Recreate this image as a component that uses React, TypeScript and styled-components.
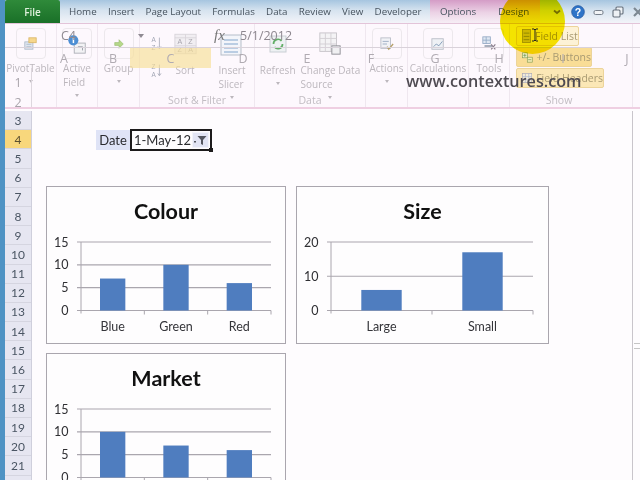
import React from "react";
import styled, { createGlobalStyle } from "styled-components";

const Global = createGlobalStyle`
  html, body { margin: 0; padding: 0; background: #fff; }
  * { box-sizing: border-box; }
`;

const Frame = styled.div`
  position: relative;
  width: 640px;
  height: 480px;
  overflow: hidden;
  display: flex;
  flex-direction: column;
  background: #fefcfe;
  border-left: 5px solid #4f93c4;
  font-family: "Open Sans", "Liberation Sans", sans-serif;
`;

const TitleBar = styled.div`
  height: 24px;
  margin-left: -5px;
  flex: none;
  display: flex;
  align-items: center;
  background: linear-gradient(#a6c5e0, #d6e3ef 45%, #f3f4f9);
  border-bottom: 1px solid #e3c4d9;
`;

const FileTab = styled.div`
  width: 55px;
  height: 23px;
  margin-left: 5px;
  display: flex;
  align-items: center;
  justify-content: center;
  background: linear-gradient(#2f8a3a, #1a7028);
  border-radius: 2px 2px 0 0;
  color: #dff0dc;
  font-size: 10px;
  font-weight: 600;
`;

const Tabs = styled.div`
  display: flex;
  align-items: center;
  gap: 11.2px;
  margin-left: 9px;
`;

const Tab = styled.span`
  color: #47535f;
  font-size: 9.8px;
  white-space: nowrap;
`;

const ContextTabs = styled.div`
  position: absolute;
  left: 425px;
  top: 0;
  width: 110px;
  height: 23px;
  display: flex;
  align-items: center;
  gap: 22px;
  padding-left: 10px;
  background: linear-gradient(#d49cc6, #ecd3e6 55%, #f6eef5);
`;

const WindowControls = styled.div`
  position: absolute;
  left: 546px;
  top: 0;
  height: 24px;
  width: 100px;
  display: flex;
  align-items: center;
  gap: 8px;
`;

const Ribbon = styled.div`
  position: relative;
  height: 85px;
  margin-bottom: 2px;
  flex: none;
  display: flex;
  background: #fdf8fd;
  border-bottom: 2px solid #efcfe2;
`;

const Group = styled.div<{ $w: number; $captionShift?: number }>`
  width: ${(p) => p.$w}px;
  flex: none;
  display: flex;
  flex-direction: column;
  align-items: center;
  padding: 4px ${(p) => p.$captionShift ?? 0}px 0 0;
  border-right: 1px solid #efe7ef;
`;

const GroupBody = styled.div`
  flex: 1 1 0;
  min-height: 0;
  display: flex;
  justify-content: center;
  gap: 5px;
  width: 100%;
`;

const SortBody = styled(GroupBody)`
  justify-content: flex-start;
  gap: 0;
  padding-left: 10px;
`;

const Caption = styled.div`
  height: 13px;
  color: #c2bdc3;
  font-size: 10.5px;
  line-height: 13px;
  white-space: nowrap;
`;

const BigButton = styled.div<{ $after?: number }>`
  display: flex;
  flex-direction: column;
  align-items: center;
  margin-right: ${(p) => p.$after ?? 0}px;
  color: #bcb7bd;
  font-size: 10px;
  line-height: 14px;
  white-space: nowrap;
`;

const IconBox = styled.div<{ $framed?: boolean; $low?: boolean }>`
  width: 30px;
  height: 31px;
  flex: none;
  margin-bottom: ${(p) => (p.$low ? 4 : 2)}px;
  display: flex;
  align-items: center;
  justify-content: center;
  border: 1px solid ${(p) => (p.$framed ? "#ece8ec" : "transparent")};
  border-radius: 4px;
`;

const Arrow = styled.span`
  width: 0;
  height: 0;
  flex: none;
  margin-top: 5px;
  border: 2px solid transparent;
  border-top: 3px solid #bcb7bd;
`;

const SortStack = styled.div`
  width: 20px;
  display: flex;
  flex-direction: column;
  gap: 11px;
  padding-top: 8px;
`;

const ShowBody = styled.div`
  flex: 1 1 0;
  min-height: 0;
  align-self: flex-start;
  display: flex;
  flex-direction: column;
  gap: 1px;
  padding-left: 6px;
  margin-top: -2px;
`;

const Chip = styled.div<{ $w: number; $tone: string }>`
  width: ${(p) => p.$w}px;
  height: 20px;
  flex: none;
  display: flex;
  align-items: center;
  gap: 4px;
  padding-left: 5px;
  background: ${(p) => p.$tone};
  border: 1px solid #ecd49a;
  border-radius: 2px;
  color: #a89a72;
  font-size: 10.5px;
  white-space: nowrap;
`;

const NameRow = styled.div`
  position: absolute;
  left: 0;
  right: 0;
  top: 0;
  height: 24px;
  display: flex;
  align-items: center;
  color: #8d878f;
  font-size: 12.5px;
  border-bottom: 1px solid #d9d2da;
`;

const NameBox = styled.span`
  width: 80px;
  padding-left: 56px;
  font-size: 12.5px;
  color: #8f8a92;
`;

const NameArrow = styled.span`
  width: 0;
  height: 0;
  margin: 4px 0 0 53px;
  border: 3px solid transparent;
  border-top: 4px solid #8f8a92;
`;

const FxMark = styled.span`
  margin-left: 70px;
  width: 26px;
  font-family: "Liberation Serif", serif;
  font-style: italic;
  font-size: 15px;
  color: #777;
`;

const ColumnRow = styled.div`
  position: absolute;
  left: 27px;
  right: 0;
  top: 24px;
  height: 20px;
  display: grid;
  grid-template-columns: 64px 34px 81px 64px 64px 64px 64px 64px 64px 64px;
  color: #b0abb2;
  font-size: 12.5px;
`;

const ColumnHead = styled.div<{ $on?: boolean }>`
  display: flex;
  align-items: center;
  justify-content: center;
  background: ${(p) => (p.$on ? "rgba(248,222,150,.65)" : "transparent")};
`;

const RibbonRows = styled.div`
  position: absolute;
  left: 0;
  top: 44px;
  width: 27px;
  bottom: 0;
  padding-top: 4px;
  display: flex;
  flex-direction: column;
  border-right: 1px solid #ddd7de;
  color: #a9a4ab;
  font-size: 12.5px;
`;

const RibbonRow = styled.div`
  height: 20px;
  flex: none;
  display: flex;
  align-items: center;
  justify-content: center;
`;

const Watermark = styled.div`
  position: absolute;
  left: 401px;
  top: 46px;
  color: #4f4b52;
  font-size: 16.2px;
  font-weight: 600;
  white-space: nowrap;
`;

const Spotlight = styled.div`
  position: absolute;
  left: 495px;
  top: -11px;
  width: 65px;
  height: 65px;
  border-radius: 50%;
  background: #f6ea00;
  mix-blend-mode: multiply;
`;

const Cursor = styled.svg`
  position: absolute;
  left: 526px;
  top: 28px;
`;

const Sheet = styled.div`
  flex: 1;
  min-height: 0;
  display: flex;
`;

const RowHeaders = styled.div`
  width: 27px;
  flex: none;
  background: #e6e6f1;
  border-right: 1px solid #cfcfdc;
`;

const RowHead = styled.div<{ $on?: boolean }>`
  height: 19.2px;
  display: flex;
  align-items: center;
  justify-content: center;
  color: ${(p) => (p.$on ? "#5c5030" : "#4a5563")};
  background: ${(p) => (p.$on ? "#f8d77c" : "transparent")};
  border-bottom: 1px solid #d5d5e0;
  font-family: Lato, "Open Sans", sans-serif;
  font-size: 12px;
`;

const Canvas = styled.div`
  flex: 1;
  min-width: 0;
  padding: 19px 0 0 14px;
`;

const FilterRow = styled.div`
  height: 20px;
  margin-left: 50px;
  display: flex;
  font-family: Lato, "Open Sans", sans-serif;
  font-size: 13px;
  color: #2b2b2f;
`;

const FilterLabel = styled.div`
  width: 34px;
  display: flex;
  align-items: center;
  justify-content: center;
  background: #dfe3f6;
`;

const FilterCell = styled.div`
  position: relative;
  width: 82px;
  height: 22px;
  margin-top: -1px;
  display: flex;
  align-items: center;
  justify-content: space-between;
  padding: 0 1px 0 2px;
  border: 2px solid #1d1b1c;
  white-space: nowrap;
`;

const FilterButton = styled.div`
  width: 17px;
  height: 16px;
  flex: none;
  display: flex;
  align-items: center;
  justify-content: center;
  background: #e2e4f4;
  border: 1px solid #f3f3fa;
`;

const Handle = styled.span`
  position: absolute;
  right: -3px;
  bottom: -3px;
  width: 4px;
  height: 4px;
  background: #1d1b1c;
`;

const ChartGrid = styled.div`
  display: grid;
  grid-template-columns: 240px 253px;
  grid-auto-rows: 158px;
  gap: 9px 10px;
  margin-top: 36px;
`;

const ChartBox = styled.section`
  border: 1px solid #aaa6ae;
  background: #fefdfe;
  display: flex;
  flex-direction: column;
`;

const ChartTitle = styled.h2`
  margin: 0;
  height: 46px;
  padding-top: 10px;
  text-align: center;
  color: #111;
  font-family: Lato, "Open Sans", sans-serif;
  font-size: 21.5px;
  font-weight: 700;
  line-height: 28px;
`;

const ScrollRail = styled.div`
  width: 8px;
  flex: none;
  display: flex;
  align-items: center;
  justify-content: center;
  border-left: 1px solid #c9c5cb;
  color: #bbb;
`;

const Grip = styled.div`
  width: 6px;
  height: 6px;
  margin-top: 100px;
  border-top: 1px solid #c5c5c5;
  border-bottom: 1px solid #c5c5c5;
`;

type Bar = { label: string; value: number };

function BarChart({ title, max, step, bars, plot }: { title: string; max: number; step: number; bars: Bar[]; plot: number }) {
  const left = 34;
  const top = 9;
  const h = 68.5;
  const y = (v: number) => top + h - (v / max) * h;
  const cat = plot / bars.length;
  const ticks: number[] = [];
  for (let v = 0; v <= max; v += step) ticks.push(v);
  return (
    <ChartBox>
      <ChartTitle>{title}</ChartTitle>
      <svg width={plot + 50} height={110} fontFamily="Lato, 'Open Sans', sans-serif" fontSize={12.5}>
        {ticks.map((v) => (
          <g key={v}>
            <line x1={left - 4} x2={left + plot} y1={y(v)} y2={y(v)} stroke="#aaa6ae" strokeWidth={1.2} />
            <text x={left - 12.5} y={y(v) + 4.5} textAnchor="end" fill="#2f2f33">{v}</text>
          </g>
        ))}
        <line x1={left} x2={left} y1={top} y2={top + h + 3} stroke="#aaa6ae" />
        {bars.map((b, i) => {
          const w = cat / 2.5;
          const x = left + cat * i + (cat - w) / 2;
          return (
            <g key={i}>
              <line x1={left + cat * (i + 1)} x2={left + cat * (i + 1)} y1={y(0)} y2={y(0) + 4} stroke="#aaa6ae" />
              <rect x={x} y={y(b.value)} width={w} height={y(0) - y(b.value)} fill="#4f7dbf" />
              {b.label && <text x={x + w / 2} y={y(0) + 20} textAnchor="middle" fill="#35353a" fontSize={12.5}>{b.label}</text>}
            </g>
          );
        })}
      </svg>
    </ChartBox>
  );
}

const Pivot = () => (
  <svg width="13" height="13" viewBox="0 0 16 16"><rect x="1" y="6" width="10" height="9" fill="#dfe6f0" stroke="#a9b6c6" /><rect x="6" y="1" width="9" height="6" fill="#f6d78c" stroke="#d8b464" /><path d="M3 9h6M3 12h6" stroke="#a9b6c6" /></svg>
);
const Field = () => (
  <svg width="22" height="22" viewBox="0 0 24 24"><rect x="9" y="11" width="12" height="11" fill="#f3f3f5" stroke="#aeb0b8" /><circle cx="8" cy="8" r="5.5" fill="#4d8fd4" /><rect x="7.3" y="5" width="1.6" height="6" fill="#fff" /><path d="M13 15h5v4" stroke="#9a9ea6" fill="none" /></svg>
);
const GreenArrow = () => (
  <svg width="10" height="10" viewBox="0 0 14 14"><path d="M1 5h6V1l6 6-6 6V9H1z" fill="#b6d88a" stroke="#8bb35f" strokeWidth=".7" /></svg>
);
const AZ = ({ flip }: { flip?: boolean }) => (
  <svg width="14" height="16" viewBox="0 0 16 20" fontFamily="Liberation Sans" fontSize="8" fill="#a2a6b4">
    <text x="1" y="8">{flip ? "Z" : "A"}</text>
    <text x="1" y="17">{flip ? "A" : "Z"}</text>
    <path d="M11 2v13m-2-2 2 3 2-3" stroke="#a2a6b4" fill="none" />
  </svg>
);
const SortIcon = () => (
  <svg width="23" height="22" viewBox="0 0 26 24" fontFamily="Liberation Sans" fontSize="8" fill="#a9a6ae">
    <rect x="1" y="1" width="24" height="22" fill="#f1eef2" stroke="#d8d4da" />
    <path d="M1 5h24M13 1v22M1 14h24" stroke="#d8d4da" />
    <text x="4" y="12">A</text><text x="16" y="12">Z</text><text x="4" y="21">Z</text><text x="16" y="21">A</text>
  </svg>
);
const SlicerIcon = () => (
  <svg width="24" height="24" viewBox="0 0 24 24"><rect x="1" y="3" width="20" height="20" fill="#f3f5fa" stroke="#b6bdc9" /><path d="M4 8h14M4 12h14M4 16h14M4 20h14" stroke="#a8c0dc" strokeWidth="1.6" /></svg>
);
const RefreshIcon = () => (
  <svg width="18" height="18" viewBox="0 0 18 18"><rect x="1" y="1" width="16" height="16" fill="#eef1f3" stroke="#c9ced4" /><path d="M4.5 9a4.5 4.5 0 0 1 8-3M13.5 9a4.5 4.5 0 0 1-8 3" stroke="#62ad66" strokeWidth="1.7" fill="none" /></svg>
);
const SourceIcon = () => (
  <svg width="24" height="26" viewBox="0 0 26 28"><rect x="2" y="2" width="18" height="20" fill="#f4f3f5" stroke="#c6c3c8" /><path d="M2 8h18M2 14h18M8 2v20M14 2v20" stroke="#d2cfd4" /><rect x="15" y="16" width="9" height="9" fill="#f0f0f2" stroke="#8d8d94" /></svg>
);
const ActionsIcon = () => (
  <svg width="14" height="14" viewBox="0 0 16 16"><rect x="1" y="1" width="11" height="12" fill="#f1f2f6" stroke="#b8bcc6" /><path d="M3 5h7M3 8h5" stroke="#98a8c0" /><path d="m8 11 2 3 5-6" stroke="#b5a06a" strokeWidth="1.5" fill="none" /></svg>
);
const CalcIcon = () => (
  <svg width="14" height="14" viewBox="0 0 16 16"><rect x="1" y="2" width="13" height="12" fill="#eef1f5" stroke="#b8bcc6" /><path d="m3 11 3-3 3 2 4-5" stroke="#7d96b5" fill="none" /></svg>
);
const ToolsIcon = () => (
  <svg width="15" height="15" viewBox="0 0 18 18"><rect x="1" y="1" width="9" height="8" fill="#dfe7f2" stroke="#92a8c4" /><path d="M1 5h9M5 1v8" stroke="#92a8c4" /><path d="M3 12h9" stroke="#7f8a9c" strokeWidth="1.6" /><path d="m11 10 5 6M16 10l-5 6" stroke="#8a7d8c" strokeWidth="1.4" /></svg>
);
const FieldListIcon = () => (
  <svg width="9" height="14" viewBox="0 0 11 17"><rect x=".5" y=".5" width="10" height="16" fill="#d6c83a" stroke="#a39a3a" /><path d="M2 5h7M2 9h7M2 13h7" stroke="#8c8a3a" /></svg>
);
const PlusMinusIcon = () => (
  <svg width="13" height="13" viewBox="0 0 17 16"><rect x=".5" y=".5" width="8" height="8" fill="#eef0c8" stroke="#7e9a50" /><path d="M2 4.5h5M4.5 2v5" stroke="#5f8a40" /><rect x="8.5" y="7.5" width="8" height="8" fill="#f3ecb6" stroke="#7e9a50" /><path d="M10 11.5h5" stroke="#5f8a40" /></svg>
);
const HeadersIcon = () => (
  <svg width="13" height="12" viewBox="0 0 15 14"><rect x=".5" y=".5" width="14" height="13" fill="#f3ecd8" stroke="#a7a6b8" /><path d="M.5 5h14M5 .5v13M10 .5v13M.5 9.5h14" stroke="#a7b2cc" /></svg>
);

const Chevron = () => (
  <svg width="12" height="8" viewBox="0 0 12 8"><path d="M3 2.5l3 2.5 3-2.5" stroke="#77751e" strokeWidth="1.8" fill="none" /></svg>
);
const Help = () => (
  <svg width="14" height="14" viewBox="0 0 14 14" fontFamily="Liberation Sans" fontWeight="700" fontSize="10.5" textAnchor="middle">
    <circle cx="7" cy="7" r="6.4" fill="#2f74c8" stroke="#1f4f94" strokeWidth=".6" /><text x="7" y="10.7" fill="#fff">?</text>
  </svg>
);
const Minimize = () => (
  <svg width="11" height="7" viewBox="0 0 11 7"><rect x="1" y="1.5" width="9" height="4" rx="1.5" fill="#f1f3f6" stroke="#77808c" /></svg>
);
const Restore = () => (
  <svg width="12" height="12" viewBox="0 0 12 12"><rect x="4" y="1" width="7" height="7" rx="1" fill="#eef1f5" stroke="#66707c" strokeWidth="1.1" /><rect x="1" y="4" width="7" height="7" rx="1" fill="#eef1f5" stroke="#66707c" strokeWidth="1.1" /></svg>
);
const Close = () => (
  <svg width="12" height="12" viewBox="0 0 12 12"><path d="M2 2l8 8M10 2l-8 8" stroke="#7d8892" strokeWidth="2.2" /></svg>
);
const FunnelIcon = () => (
  <svg width="13" height="11" viewBox="0 0 13 11"><path d="M3.5 1h9L9 5v5L7 9V5z" fill="#54565f" /><rect x="0" y="6" width="2" height="1.5" fill="#54565f" /></svg>
);

const rows = Array.from({ length: 19 }, (_, i) => i + 3);
const columns = ["A", "B", "C", "D", "E", "F", "G", "H", "I", "J"];

export default function App() {
  return (
    <>
      <Global />
      <Frame>
        <TitleBar>
          <FileTab>File</FileTab>
          <Tabs>
            {["Home", "Insert", "Page Layout", "Formulas", "Data", "Review", "View", "Developer"].map((t) => (
              <Tab key={t}>{t}</Tab>
            ))}
          </Tabs>
          <ContextTabs>
            <Tab>Options</Tab>
            <Tab>Design</Tab>
          </ContextTabs>
          <WindowControls>
            <Chevron />
            <Help />
            <Minimize />
            <Restore />
            <Close />
          </WindowControls>
        </TitleBar>
        <Ribbon>
          <Group $w={52}>
            <GroupBody>
              <BigButton><IconBox $framed><Pivot /></IconBox>PivotTable<Arrow /></BigButton>
            </GroupBody>
            <Caption />
          </Group>
          <Group $w={41}>
            <GroupBody>
              <BigButton><IconBox $framed><Field /></IconBox>Active<br />Field<Arrow /></BigButton>
            </GroupBody>
            <Caption />
          </Group>
          <Group $w={42}>
            <GroupBody>
              <BigButton><IconBox $framed><GreenArrow /></IconBox>Group<Arrow /></BigButton>
            </GroupBody>
            <Caption />
          </Group>
          <Group $w={115}>
            <SortBody>
              <SortStack><AZ /><AZ flip /></SortStack>
              <BigButton $after={17}><IconBox $low><SortIcon /></IconBox>Sort</BigButton>
              <BigButton><IconBox $low><SlicerIcon /></IconBox>Insert<br />Slicer<Arrow /></BigButton>
            </SortBody>
            <Caption>Sort &amp; Filter</Caption>
          </Group>
          <Group $w={111}>
            <GroupBody>
              <BigButton><IconBox $low><RefreshIcon /></IconBox>Refresh<Arrow /></BigButton>
              <BigButton><IconBox $low><SourceIcon /></IconBox>Change Data<br />Source<Arrow /></BigButton>
            </GroupBody>
            <Caption>Data</Caption>
          </Group>
          <Group $w={42}>
            <GroupBody>
              <BigButton><IconBox $framed><ActionsIcon /></IconBox>Actions<Arrow /></BigButton>
            </GroupBody>
            <Caption />
          </Group>
          <Group $w={61}>
            <GroupBody>
              <BigButton><IconBox $framed><CalcIcon /></IconBox>Calculations</BigButton>
            </GroupBody>
            <Caption />
          </Group>
          <Group $w={41}>
            <GroupBody>
              <BigButton><IconBox $framed><ToolsIcon /></IconBox>Tools</BigButton>
            </GroupBody>
            <Caption />
          </Group>
          <Group $w={123} $captionShift={24}>
            <ShowBody>
              <Chip $w={63} $tone="#fdf2d6"><FieldListIcon />Field List</Chip>
              <Chip $w={76} $tone="#f9dd96"><PlusMinusIcon />+/- Buttons</Chip>
              <Chip $w={88} $tone="#fbe7b6"><HeadersIcon />Field Headers</Chip>
            </ShowBody>
            <Caption>Show</Caption>
          </Group>

          <NameRow>
            <NameBox>C4</NameBox>
            <NameArrow />
            <FxMark>fx</FxMark>
            5/1/2012
          </NameRow>
          <ColumnRow>
            {columns.map((c) => (
              <ColumnHead key={c} $on={c === "C"}>{c}</ColumnHead>
            ))}
          </ColumnRow>
          <RibbonRows>
            <RibbonRow>1</RibbonRow>
            <RibbonRow>2</RibbonRow>
          </RibbonRows>
          <Watermark>www.contextures.com</Watermark>
        </Ribbon>
        <Sheet>
          <RowHeaders>
            {rows.map((r) => (
              <RowHead key={r} $on={r === 4}>{r}</RowHead>
            ))}
          </RowHeaders>
          <Canvas>
            <FilterRow>
              <FilterLabel>Date</FilterLabel>
              <FilterCell>
                1-May-12
                <FilterButton><FunnelIcon /></FilterButton>
                <Handle />
              </FilterCell>
            </FilterRow>
            <ChartGrid>
              <BarChart title="Colour" max={15} step={5} plot={190} bars={[{ label: "Blue", value: 7 }, { label: "Green", value: 10 }, { label: "Red", value: 6 }]} />
              <BarChart title="Size" max={20} step={10} plot={202} bars={[{ label: "Large", value: 6 }, { label: "Small", value: 17 }]} />
              <BarChart title="Market" max={15} step={5} plot={190} bars={[{ label: "", value: 10 }, { label: "", value: 7 }, { label: "", value: 6 }]} />
            </ChartGrid>
          </Canvas>
          <ScrollRail><Grip /></ScrollRail>
        </Sheet>
        <Spotlight />
        <Cursor width="8" height="14" viewBox="0 0 8 14"><path d="M1 1h2l1 1 1-1h2M4 2v10M1 13h2l1-1 1 1h2" stroke="#222" fill="none" /></Cursor>
      </Frame>
    </>
  );
}
